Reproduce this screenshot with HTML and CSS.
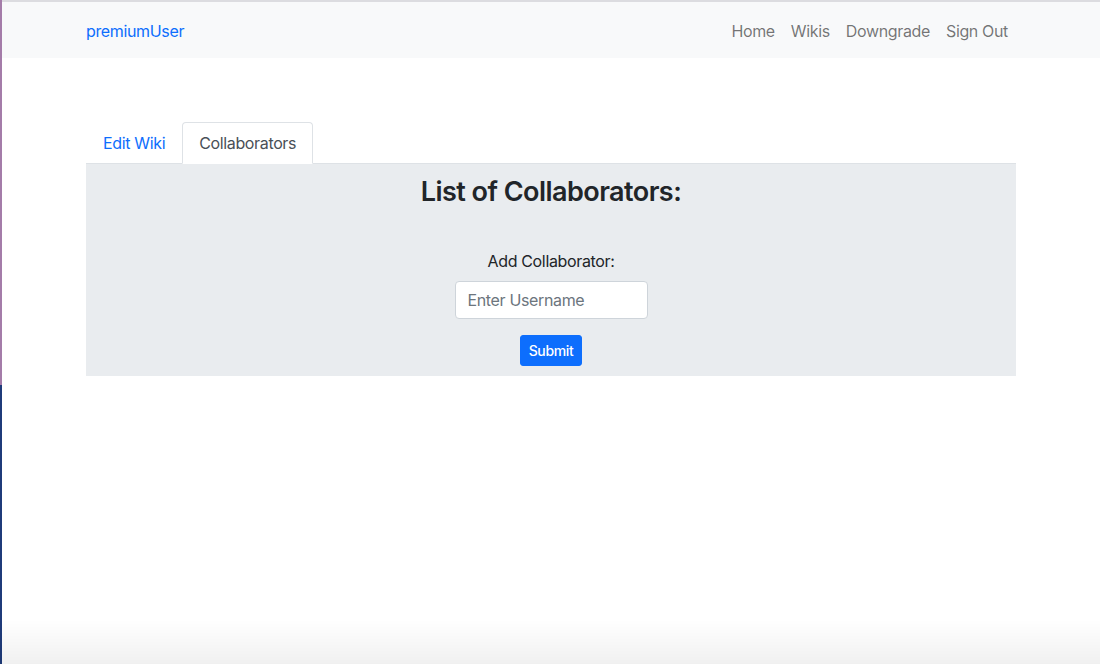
FILE: index.html
```html
<!DOCTYPE html>
<html lang="en">
<head>
<meta charset="utf-8">
<title>Collaborators</title>
<link rel="stylesheet" href="styles.css">
</head>
<body>
<nav class="navbar">
  <div class="container nav-inner">
    <a class="brand" href="#">premiumUser</a>
    <ul class="nav-links">
      <li><a href="#">Home</a></li>
      <li><a href="#">Wikis</a></li>
      <li><a href="#">Downgrade</a></li>
      <li><a href="#">Sign Out</a></li>
    </ul>
  </div>
</nav>
<main class="container main">
  <ul class="tabs">
    <li><a class="tab" href="#">Edit Wiki</a></li>
    <li><a class="tab active" href="#">Collaborators</a></li>
  </ul>
  <section class="tab-content">
    <h2 class="title">List of Collaborators:</h2>
    <form class="collab-form">
      <label class="label" for="username">Add Collaborator:</label>
      <input class="input" id="username" type="text" placeholder="Enter Username">
      <button class="btn" type="button">Submit</button>
    </form>
  </section>
</main>
<div class="bottom-shade"></div>
</body>
</html>
```
FILE: styles.css
```css
* { box-sizing: border-box; }
html, body { margin: 0; padding: 0; }
body {
  font-family: Inter, "Liberation Sans", Arial, sans-serif;
  font-size: 16px;
  line-height: 1.5;
  letter-spacing: -0.022em;
  color: #212529;
  background: #fff;
  min-height: 664px;
  border-left: 2px solid #a47ca9;
  border-image: linear-gradient(to bottom, #a47ca9 0, #a47ca9 385px, #1f3b7a 385px, #1f3b7a 100%) 1;
}
a { text-decoration: none; }
.container {
  width: 960px;
  margin: 0 auto;
  padding: 0 15px;
}
.navbar {
  background: #f8f9fa;
  border-top: 2px solid #dcdce0;
  height: 58px;
}
.nav-inner {
  display: flex;
  align-items: center;
  justify-content: space-between;
  height: 56px;
  padding-top: 2px;
}
.brand {
  color: #0d6efd;
  font-size: 16px;
}
.nav-links {
  list-style: none;
  margin: 0;
  padding: 0;
  display: flex;
}
.nav-links a {
  display: block;
  padding: 8px 8px;
  color: rgba(0, 0, 0, 0.55);
}
.main { padding-top: 64px; }
.tabs {
  list-style: none;
  margin: 0;
  padding: 0;
  display: flex;
  border-bottom: 1px solid #dee2e6;
}
.tab {
  display: block;
  padding: 8px 16px;
  color: #0d6efd;
  border: 1px solid transparent;
  border-top-left-radius: 4px;
  border-top-right-radius: 4px;
  margin-bottom: -1px;
}
.tab.active {
  color: #495057;
  background: #fff;
  border-color: #dee2e6 #dee2e6 #fff;
}
.tab-content {
  background: #e9ecef;
  text-align: center;
  padding: 11px 0 10px;
}
.title {
  margin: 0 0 40px;
  font-size: 27px;
  font-weight: 600;
  line-height: 34px;
  letter-spacing: -0.02em;
}
.collab-form {
  display: flex;
  flex-direction: column;
  align-items: center;
}
.label {
  display: block;
  margin-bottom: 8px;
}
.input {
  width: 193px;
  height: 38px;
  padding: 6px 12px;
  font: inherit;
  letter-spacing: inherit;
  color: #495057;
  background: #fff;
  border: 1px solid #ced4da;
  border-radius: 4px;
}
.input::placeholder { color: #6c757d; }
.btn {
  margin-top: 16px;
  font-family: inherit;
  letter-spacing: inherit;
  font-size: 14px;
  font-weight: 500;
  line-height: 21px;
  padding: 4px 8px;
  color: #fff;
  background: #0d6efd;
  border: 1px solid #0d6efd;
  border-radius: 3px;
}
.bottom-shade {
  position: fixed;
  left: 0;
  right: 0;
  bottom: 0;
  height: 44px;
  background: linear-gradient(to bottom, rgba(0,0,0,0), rgba(0,0,0,0.06));
  pointer-events: none;
}
```
